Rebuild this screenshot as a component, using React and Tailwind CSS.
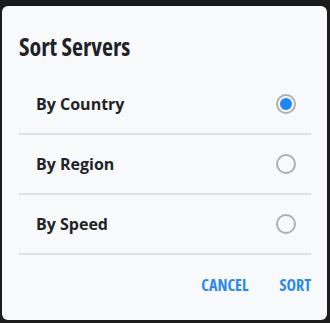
import React from "react";

function Radio({ checked }) {
  return (
    <div className="w-[20px] h-[20px] rounded-full border-2 border-[#b0b0b0] flex items-center justify-center">
      {checked && <div className="w-[12px] h-[12px] rounded-full bg-[#1e88f0]" />}
    </div>
  );
}

function Row({ label, checked }) {
  return (
    <div className="h-[60px] border-b-2 border-[#dfe1e4] flex items-center justify-between pl-[17px] pr-[15px]">
      <span className="text-[16px] font-bold text-[#1f2328]">{label}</span>
      <Radio checked={checked} />
    </div>
  );
}

export default function App() {
  return (
    <div className="w-[330px] h-[323px] bg-[#1b1b1b] pt-[6px] pl-[2px] pr-[3px] pb-[3px]" style={{ fontFamily: '"Open Sans", sans-serif' }}>
      <div className="h-full bg-[#f7f9fb] rounded-[6px] flex flex-col">
        <div className="pl-[17px] pt-[26px] text-[24px] font-bold text-[#1f2328] leading-[30px] font-stretch-condensed">Sort Servers</div>
        <div className="ml-[17px] mr-[16px] mt-[13px]">
          <Row label="By Country" checked />
          <Row label="By Region" />
          <Row label="By Speed" />
        </div>
        <div className="flex justify-end gap-[31px] pr-[16px] pt-[18px]">
          <span className="text-[16px] font-bold text-[#2a8ae6] font-stretch-condensed">CANCEL</span>
          <span className="text-[16px] font-bold text-[#2a8ae6] font-stretch-condensed">SORT</span>
        </div>
      </div>
    </div>
  );
}
